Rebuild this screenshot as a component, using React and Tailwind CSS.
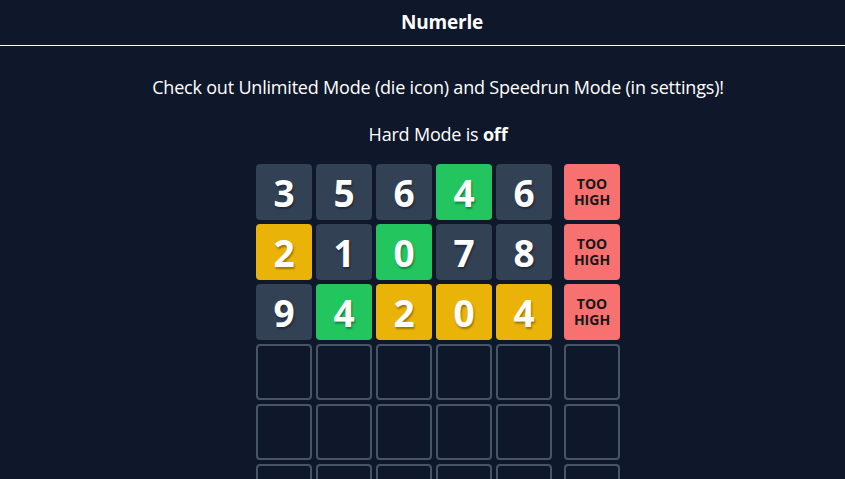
import React from "react";

const rows = [
  { cells: [["3", "g"], ["5", "g"], ["6", "g"], ["4", "c"], ["6", "g"]], hint: true },
  { cells: [["2", "y"], ["1", "g"], ["0", "c"], ["7", "g"], ["8", "g"]], hint: true },
  { cells: [["9", "g"], ["4", "c"], ["2", "y"], ["0", "y"], ["4", "y"]], hint: true },
  { cells: null },
  { cells: null },
  { cells: null },
];

const bg = { g: "bg-[#334155]", c: "bg-[#22c55e]", y: "bg-[#eab308]" };

function Tile({ v, s }) {
  return (
    <div
      className={`w-[56px] h-[56px] rounded-[4px] flex items-center justify-center text-white font-bold text-[37px] leading-none ${bg[s]}`}
      style={{ textShadow: "1px 2px 2px rgba(0,0,0,0.35)" }}
    >
      {v}
    </div>
  );
}

function Empty() {
  return <div className="w-[56px] h-[56px] rounded-[4px] border-2 border-[#475569]" />;
}

export default function App() {
  return (
    <div
      className="min-h-screen bg-[#0f172a] text-white"
      style={{ fontFamily: '"Open Sans", "Noto Sans", sans-serif' }}
    >
      <header className="h-[46px] border-b border-white flex items-center justify-center pl-[39px]">
        <h1 className="text-[19px] font-bold tracking-[-0.2px]">Numerle</h1>
      </header>
      <div className="flex flex-col items-center pl-[31px]">
        <p className="mt-[29px] text-[18px] leading-[24px] tracking-[-0.2px]">
          Check out Unlimited Mode (die icon) and Speedrun Mode (in settings)!
        </p>
        <p className="mt-[23px] text-[18px] leading-[24px] tracking-[-0.2px]">
          Hard Mode is <span className="font-bold">off</span>
        </p>
        <div className="mt-[18px] flex flex-col gap-[4px]">
          {rows.map((r, i) => (
            <div key={i} className="flex">
              <div className="flex gap-[4px]">
                {r.cells
                  ? r.cells.map(([v, s], j) => <Tile key={j} v={v} s={s} />)
                  : [0, 1, 2, 3, 4].map((j) => <Empty key={j} />)}
              </div>
              <div className="ml-[12px]">
                {r.hint ? (
                  <div className="w-[56px] h-[56px] rounded-[4px] bg-[#f87171] flex flex-col items-center justify-center text-[#171717] font-bold text-[14px] leading-[16px]">
                    <span>TOO</span>
                    <span>HIGH</span>
                  </div>
                ) : (
                  <Empty />
                )}
              </div>
            </div>
          ))}
        </div>
      </div>
    </div>
  );
}
